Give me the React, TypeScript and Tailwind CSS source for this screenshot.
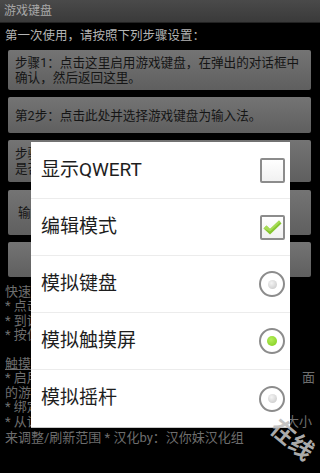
import React from "react";

const font = { fontFamily: '"Roboto", "Noto Sans CJK SC", sans-serif' };

function StepButton({ h, children }: { h: string; children?: React.ReactNode }) {
  return (
    <div
      className={`${h} flex items-center px-[7px] rounded-[2px] bg-gradient-to-b from-[#747474] to-[#5f5f5f] text-[#151515] text-[12.6px] leading-[15px] whitespace-nowrap`}
    >
      <div>{children}</div>
    </div>
  );
}

function CheckBox({ checked }: { checked: boolean }) {
  return (
    <div className="w-[25px] h-[25px] border-2 border-[#8c8c8c] rounded-[2px] bg-gradient-to-b from-white to-[#f1f1f1] flex items-center justify-center">
      {checked && (
        <svg width="21" height="17" viewBox="0 0 21 17">
          <path d="M1.5 9.5 L4.5 6.5 L8 10 L17 1.5 L19.5 4.5 L8 15.5 Z" fill="#86c630" />
          <path d="M1.5 9.5 L4.5 6.5 L8 10 L17 1.5 L18.5 3 L8 12.5 Z" fill="#a6dc55" />
        </svg>
      )}
    </div>
  );
}

function Radio({ checked }: { checked: boolean }) {
  return (
    <div className="w-[26px] h-[26px] rounded-full border-2 border-[#8c8c8c] bg-white flex items-center justify-center">
      {checked ? (
        <div className="w-[10px] h-[10px] rounded-full bg-[radial-gradient(circle_at_40%_35%,#b4ee5a,#7fcc1c)]" />
      ) : (
        <div className="w-[9px] h-[9px] rounded-full bg-[radial-gradient(circle_at_40%_35%,#f4f4f4,#c4c4c4)]" />
      )}
    </div>
  );
}

const options = [
  { label: "显示QWERT", type: "check", on: false },
  { label: "编辑模式", type: "check", on: true },
  { label: "模拟键盘", type: "radio", on: false },
  { label: "模拟触摸屏", type: "radio", on: true },
  { label: "模拟摇杆", type: "radio", on: false },
];

export default function App() {
  return (
    <div className="relative w-[320px] h-[473px] bg-black overflow-hidden" style={font}>
      {/* 标题栏 */}
      <div className="h-[23px] bg-gradient-to-b from-[#4a4a4a] to-[#3a3a3a] border-b border-[#222] flex items-center px-[4px]">
        <span className="text-[12px] text-[#a8a8a8]">游戏键盘</span>
      </div>

      <div className="h-[27px] flex items-center px-[5px] text-[12.5px] text-[#b4b4b4]">
        第一次使用，请按照下列步骤设置：
      </div>

      {/* 步骤按钮 */}
      <div className="flex flex-col gap-[7px] pl-[8px] pr-[9px]">
        <StepButton h="h-[40px]">
          步骤1：点击这里启用游戏键盘，在弹出的对话框中
          <br />
          确认，然后返回这里。
        </StepButton>
        <StepButton h="h-[36px]">第2步：点击此处并选择游戏键盘为输入法。</StepButton>
        <StepButton h="h-[42px]">
          步骤3：点击这里打开游戏键盘设置，
          <br />
          是否需要更多帮助
        </StepButton>
        <div className="mt-[1px]">
          <StepButton h="h-[45px]">
            <span className="pl-[3px]">输入法设置</span>
          </StepButton>
        </div>
        <StepButton h="h-[35px]" />
      </div>

      {/* 说明文字 */}
      <div className="mt-[8px] px-[5px] text-[13px] leading-[14.4px] text-[#6e6e6e]">
        <div>快速入门：</div>
        <div>* 点击输入框调出游戏键盘</div>
        <div>* 到设置中选择按键映射</div>
        <div>* 按住按键拖动调整位置</div>
        <div className="h-[14.4px]" />
        <div className="underline">触摸屏模式：</div>
        <div className="flex justify-between">
          <span>* 启用后按键将映射到屏幕</span>
          <span>面</span>
        </div>
        <div>的游戏区域</div>
        <div>* 绑定按键到触摸位置</div>
        <div className="flex justify-between">
          <span>* 从设置中拖动边框</span>
          <span className="pr-[3px]">大小</span>
        </div>
        <div className="mt-[2px]">来调整/刷新范围 * 汉化by：汉你妹汉化组</div>
      </div>

      {/* 对话框 */}
      <div className="absolute left-[31px] top-[142px] w-[259px] bg-white border-b border-[#c8c8c8]">
        {options.map((o, i) => (
          <div
            key={o.label}
            className={`h-[57px] flex items-center justify-between pl-[10px] pr-[5px] ${
              i < options.length - 1 ? "border-b border-[#ececec]" : ""
            }`}
          >
            <span className="text-[19px] text-[#1e1e1e]">{o.label}</span>
            {o.type === "check" ? <CheckBox checked={o.on} /> : <Radio checked={o.on} />}
          </div>
        ))}
      </div>

      {/* 水印 */}
      <div className="absolute left-[268px] top-[428px] rotate-[40deg] text-[24px] font-bold leading-none text-[#bdbdbd] opacity-90">
        在线
      </div>
    </div>
  );
}
